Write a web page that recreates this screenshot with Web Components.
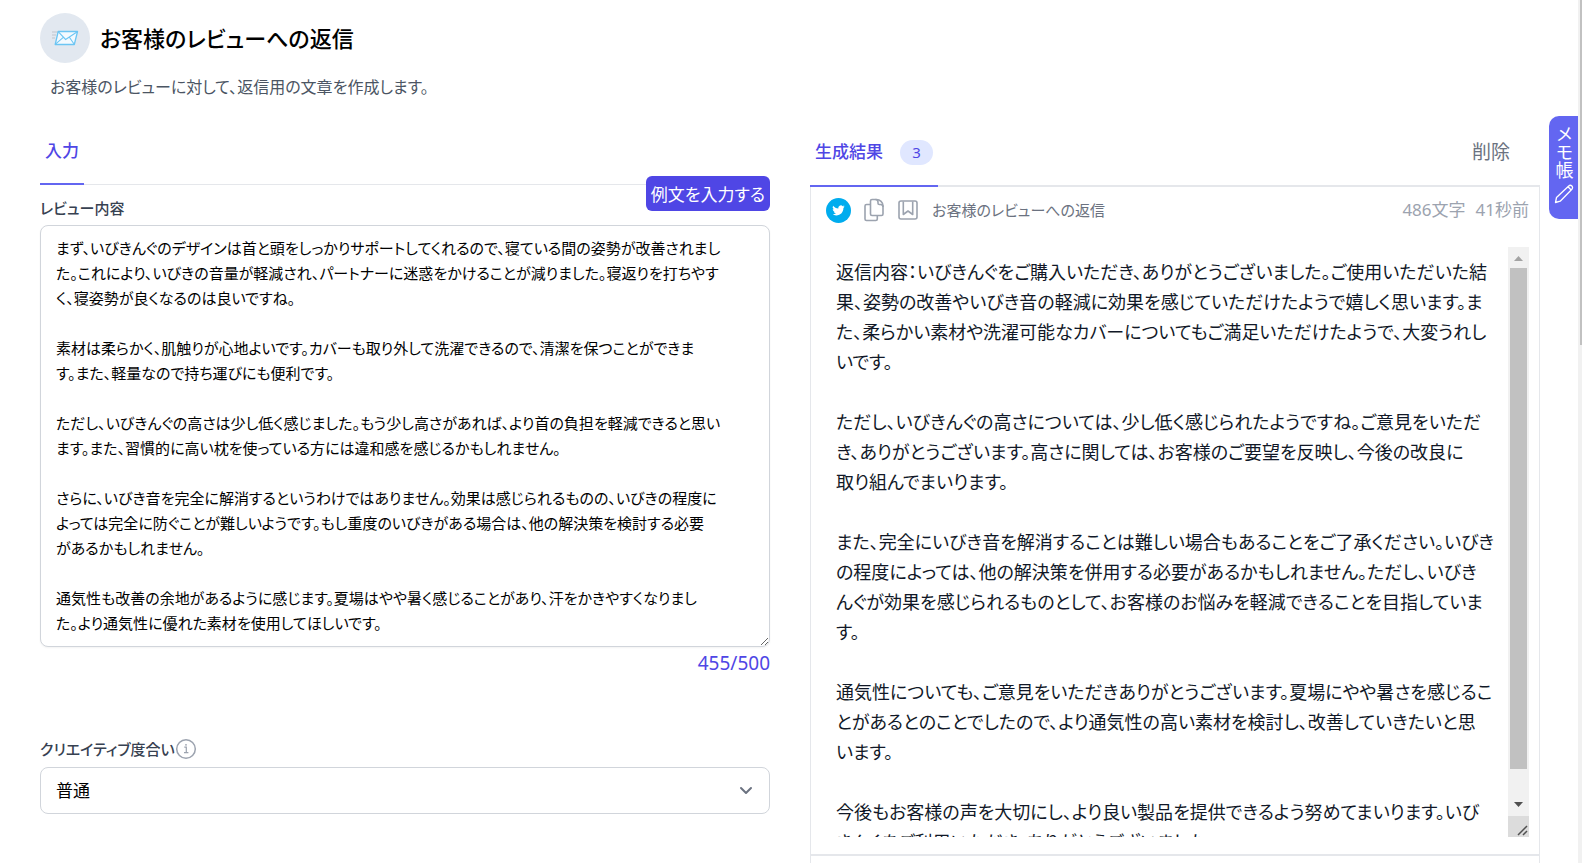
<!DOCTYPE html>
<html lang="ja">
<head>
<meta charset="utf-8">
<title>お客様のレビューへの返信</title>
<style>
html, body { margin: 0; height: 100%; overflow: hidden; background: #fff; }
body { font-family: "Noto Sans", "Noto Sans CJK JP", sans-serif; font-feature-settings: "palt"; color: #111827; }
</style>
</head>
<body>
<app-shell>
  <page-header>
    <span slot="title">お客様のレビューへの返信</span>
    <span slot="lead">お客様のレビューに対して、返信用の文章を作成します。</span>
  </page-header>
  <input-panel slot="left"></input-panel>
  <result-panel slot="right"></result-panel>
  <memo-tab slot="overlay"></memo-tab>
</app-shell>

<script>
const define = (name, html, setup) => {
  const tpl = document.createElement('template');
  tpl.innerHTML = html;
  customElements.define(name, class extends HTMLElement {
    constructor() {
      super();
      this.attachShadow({ mode: 'open' }).append(tpl.content.cloneNode(true));
      if (setup) setup(this.shadowRoot);
    }
  });
};

const review = `まず、いびきんぐのデザインは首と頭をしっかりサポートしてくれるので、寝ている間の姿勢が改善されまし
た。これにより、いびきの音量が軽減され、パートナーに迷惑をかけることが減りました。寝返りを打ちやす
く、寝姿勢が良くなるのは良いですね。

素材は柔らかく、肌触りが心地よいです。カバーも取り外して洗濯できるので、清潔を保つことができま
す。また、軽量なので持ち運びにも便利です。

ただし、いびきんぐの高さは少し低く感じました。もう少し高さがあれば、より首の負担を軽減できると思い
ます。また、習慣的に高い枕を使っている方には違和感を感じるかもしれません。

さらに、いびき音を完全に解消するというわけではありません。効果は感じられるものの、いびきの程度に
よっては完全に防ぐことが難しいようです。もし重度のいびきがある場合は、他の解決策を検討する必要
があるかもしれません。

通気性も改善の余地があるように感じます。夏場はやや暑く感じることがあり、汗をかきやすくなりまし
た。より通気性に優れた素材を使用してほしいです。`;

const reply = `返信内容：いびきんぐをご購入いただき、ありがとうございました。ご使用いただいた結
果、姿勢の改善やいびき音の軽減に効果を感じていただけたようで嬉しく思います。ま
た、柔らかい素材や洗濯可能なカバーについてもご満足いただけたようで、大変うれし
いです。

ただし、いびきんぐの高さについては、少し低く感じられたようですね。ご意見をいただ
き、ありがとうございます。高さに関しては、お客様のご要望を反映し、今後の改良に
取り組んでまいります。

また、完全にいびき音を解消することは難しい場合もあることをご了承ください。いびき
の程度によっては、他の解決策を併用する必要があるかもしれません。ただし、いびき
んぐが効果を感じられるものとして、お客様のお悩みを軽減できることを目指していま
す。

通気性についても、ご意見をいただきありがとうございます。夏場にやや暑さを感じるこ
とがあるとのことでしたので、より通気性の高い素材を検討し、改善していきたいと思
います。

今後もお客様の声を大切にし、より良い製品を提供できるよう努めてまいります。いび
きんぐをご利用いただき、ありがとうございました。
`;

define('app-shell', `
<style>
  :host { display: flex; height: 100vh; position: relative; overflow: hidden; }
  main { flex: 1; min-width: 0; padding: 13px 38px 0 40px; display: flex; flex-direction: column; box-sizing: border-box; }
  .cols { flex: 1; display: grid; grid-template-columns: 1fr 1fr; gap: 40px; margin-top: 16px; }
  .bar { width: 4px; background: #f1f1f1; display: flex; justify-content: flex-end; }
  .bar i { width: 2px; height: 40%; background: #c1c1c1; }
</style>
<main><slot></slot><div class="cols"><slot name="left"></slot><slot name="right"></slot></div></main>
<div class="bar" aria-hidden="true"><i></i></div>
<slot name="overlay"></slot>`);

define('page-header', `
<style>
  :host { display: block; }
  .row { display: flex; align-items: center; gap: 10px; }
  .icon { width: 50px; height: 50px; border-radius: 50%; background: #e2e8f0; display: grid; place-items: center; }
  h1 { margin: 0; font-size: 22px; line-height: 36px; font-weight: 500; color: #000; }
  p { margin: 11px 0 0 10px; font-size: 16px; line-height: 26px; color: #4b5563; }
</style>
<div class="row">
  <span class="icon"><svg width="28" height="18" viewBox="0 0 28 18" aria-hidden="true">
    <path d="M1 3h6M1 6h4M1 9h3" stroke="#cbd0d8" stroke-width="1.4"/>
    <path d="M7.2 2.5H26.5L23.3 15.5H4.2Z" fill="#f4faff" stroke="#6cc5f3" stroke-width="1.3" stroke-linejoin="round"/>
    <path d="M7.4 2.8 14.6 10.5 26.3 2.8M4.5 15.2 12.3 8.4M23.2 15.2 18.4 8.2" fill="none" stroke="#6cc5f3" stroke-width="1.1"/>
  </svg></span>
  <h1><slot name="title"></slot></h1>
</div>
<p><slot name="lead"></slot></p>`);

define('tab-bar', `
<style>
  :host { display: flex; justify-content: space-between; height: 69px; box-sizing: border-box; box-shadow: inset 0 -1px #e5e7eb; font-size: 17px; line-height: 26px; }
  :host([wide]) { height: 71px; box-shadow: inset 0 -2px #e5e7eb; }
  button { all: unset; box-sizing: border-box; padding: 3px 5px 0; border-bottom: 2px solid #6366f1; color: #4f46e5; font-weight: 500; display: flex; align-items: center; gap: 17px; }
  ::slotted([slot=end]) { align-self: center; }
</style>
<button type="button" role="tab" aria-selected="true"><slot></slot></button>
<slot name="end"></slot>`);

define('input-panel', `
<style>
  :host { display: block; min-width: 0; position: relative; }
  .example { position: absolute; right: 0; top: 60px; height: 35px; padding: 0 5px; border: 0; border-radius: 6px; background: #4f46e5; color: #fff; font: inherit; font-feature-settings: inherit; font-size: 17px; }
  label { font-size: 15px; line-height: 26px; font-weight: 500; color: #374151; }
  .label { display: flex; align-items: center; margin: 10px 0 4px; }
  .label.second { margin: 59px 0 5px; }
  textarea { display: block; width: 100%; box-sizing: border-box; margin: 0; padding: 10px 15px; border: 1px solid #d1d5db; border-radius: 8px; box-shadow: 0 1px 2px #0000000d; background: #fff; color: #000; font-family: inherit; font-feature-settings: inherit; font-size: 15px; line-height: 25px; resize: vertical; outline: 0; overflow: hidden; }
  output { display: block; text-align: right; font-size: 19px; line-height: 28px; margin-top: 2px; color: #4f46e5; }
  .select { display: grid; align-items: center; }
  .select > * { grid-area: 1 / 1; }
  .select svg { justify-self: end; margin-right: 16px; pointer-events: none; }
  select { appearance: none; width: 100%; height: 47px; padding: 0 15px; border: 1px solid #d1d5db; border-radius: 8px; background: #fff; color: #000; font-family: inherit; font-feature-settings: inherit; font-size: 17px; }
</style>
<tab-bar>入力</tab-bar>
<button class="example" type="button">例文を入力する</button>
<div class="label"><label for="review">レビュー内容</label></div>
<textarea id="review" rows="16" spellcheck="false"></textarea>
<output for="review">455/500</output>
<div class="label second"><label for="level">クリエイティブ度合い</label>
  <svg width="22" height="22" viewBox="0 0 22 22" fill="none" stroke="#9ca3af" aria-hidden="true"><circle cx="11" cy="11" r="9.3" stroke-width="1.5"/><path d="M9.3 9.2h2v5.3M9 14.7h4.4" stroke-width="1.2"/><circle cx="11" cy="6.8" r=".9" fill="#9ca3af" stroke="none"/></svg>
</div>
<div class="select">
  <select id="level"><option>普通</option></select>
  <svg width="16" height="16" viewBox="0 0 16 16" fill="none" stroke="#6b7280" stroke-width="2" stroke-linecap="round" stroke-linejoin="round" aria-hidden="true"><path d="m3 5 5 5 5-5"/></svg>
</div>`, root => { root.querySelector('textarea').value = review; });

define('result-panel', `
<style>
  :host { display: flex; flex-direction: column; min-width: 0; }
  .count { background: #e0e7ff; border-radius: 13px; width: 33px; height: 25px; line-height: 25px; text-align: center; font-size: 15px; font-weight: 400; }
  .delete { all: unset; margin-right: 30px; font-size: 19px; color: #6b7280; }
  .body { flex: 1; border: solid #e5e7eb; border-width: 0 1px; }
  article { border-bottom: 2px solid #e5e7eb; padding: 10px 10px 17px 15px; }
  header { display: flex; align-items: center; gap: 13px; height: 26px; font-size: 15px; line-height: 26px; color: #6b7280; }
  header button { all: unset; display: flex; }
  header .meta { margin-left: auto; display: flex; gap: 10px; font-size: 17px; color: #9ca3af; }
  .scroller { display: grid; grid-template-columns: 1fr 21px; margin-top: 24px; }
  textarea { display: block; box-sizing: border-box; width: 100%; margin: 0; border: 0; padding: 10px 0 10px 10px; background: #fff; color: #111827; font-family: inherit; font-feature-settings: inherit; font-size: 18px; line-height: 30px; resize: none; outline: 0; scrollbar-width: none; }
  .bar { background: #f1f1f1; display: flex; flex-direction: column; align-items: center; }
  .bar svg { display: block; flex: none; }
  .track { flex: 1; width: 17px; }
  .track i { display: block; height: 95%; background: #c1c1c1; }
  .grip { background: #dcdcdc; }
</style>
<tab-bar wide>生成結果<span class="count">3</span></tab-bar>
<div class="body">
  <article>
    <header>
      <button type="button" aria-label="Twitter"><svg width="25" height="25" viewBox="0 0 25 25"><circle cx="12.5" cy="12.5" r="12.5" fill="#00acee"/><path transform="translate(6.2 6.2) scale(.52)" fill="#fff" d="M23.95 4.57a10 10 0 0 1-2.82.78 4.96 4.96 0 0 0 2.16-2.73c-.95.56-2 .96-3.13 1.18a4.92 4.92 0 0 0-8.38 4.49C7.69 8.1 4.07 6.13 1.64 3.16a4.92 4.92 0 0 0 1.52 6.57 4.9 4.9 0 0 1-2.23-.61v.06a4.92 4.92 0 0 0 3.95 4.83 5 5 0 0 1-2.21.08 4.94 4.94 0 0 0 4.6 3.42A9.87 9.87 0 0 1 0 19.54a14 14 0 0 0 7.55 2.21c9.05 0 14-7.5 14-13.98 0-.21 0-.42-.02-.63a9.94 9.94 0 0 0 2.42-2.57z"/></svg></button>
      <button type="button" aria-label="コピー"><svg width="20" height="24" viewBox="0 0 20 24" fill="none" stroke="#9ca3af" stroke-width="1.6" stroke-linejoin="round"><path d="M8 1.5h4.500c3.500 0 6.500 3 6.500 6.500v8a1.500 1.500 0 0 1-1.500 1.500H8A1.500 1.500 0 0 1 6.500 16V3A1.500 1.500 0 0 1 8 1.500Z"/><path d="M11.500 1.500c1.500 0 2.500 1 2.500 2.500v1.200c0 .8.500 1.300 1.300 1.300h1.200c1.500 0 2.500 1 2.500 2.500M6.500 6.500h-4A1.500 1.500 0 0 0 1 8v13a1.500 1.500 0 0 0 1.500 1.500h9.300a1.500 1.500 0 0 0 1.500-1.500v-3.500"/></svg></button>
      <button type="button" aria-label="保存"><svg width="22" height="20" viewBox="0 0 22 20" fill="none" stroke="#9ca3af" stroke-width="1.600" stroke-linejoin="round"><rect x="2" y="1" width="18" height="18" rx="2"/><path d="M6.300 1.500v13l4.700-3.500 4.700 3.500v-13"/></svg></button>
      <span>お客様のレビューへの返信</span>
      <span class="meta"><span>486文字</span><span>41秒前</span></span>
    </header>
    <div class="scroller">
      <textarea rows="19" aria-label="返信内容" spellcheck="false"></textarea>
      <div class="bar" aria-hidden="true">
        <svg width="21" height="21" viewBox="0 0 21 21"><path d="M6 14h9l-4.500-5z" fill="#a3a3a3"/></svg>
        <div class="track"><i></i></div>
        <svg width="21" height="21" viewBox="0 0 21 21"><path d="M6 7h9l-4.500 5z" fill="#505050"/></svg>
        <svg class="grip" width="21" height="21" viewBox="0 0 21 21"><path d="m10 19 9-9M15 19l4-4" stroke="#505050" stroke-width="1.500"/></svg>
      </div>
    </div>
  </article>
</div>`, root => {
  root.querySelector('textarea').value = reply;
  const del = document.createElement('button');
  del.type = 'button'; del.className = 'delete'; del.slot = 'end'; del.textContent = '削除';
  root.querySelector('tab-bar').append(del);
});

define('memo-tab', `
<style>
  :host { position: absolute; right: 4px; top: 116px; }
  button { all: unset; box-sizing: border-box; width: 29px; padding: 9px 0 15px; border-radius: 10px 0 0 10px; background: #6366f1; color: #fff; font-size: 18px; line-height: 26px; display: flex; flex-direction: column; align-items: center; }
  span { writing-mode: vertical-rl; font-feature-settings: normal; }
  svg { margin-top: 5px; }
</style>
<button type="button"><span>メモ帳</span>
<svg width="20" height="20" viewBox="0 0 20 20" fill="none" stroke="#fff" stroke-width="1.300" stroke-linejoin="round" aria-hidden="true"><path d="M1.500 18.500 2.500 13.500 14.700 2a2.200 2.200 0 0 1 3.200 3.200L6.200 17.200ZM14 2.800l3.200 3.200"/></svg></button>`);
</script>
</body>
</html>
